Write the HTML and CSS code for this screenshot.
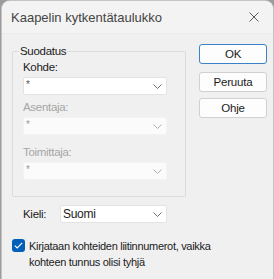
FILE: index.html
```html
<!DOCTYPE html>
<html lang="fi">
<head>
    <meta charset="UTF-8">
    <title>Kaapelin kytkentätaulukko</title>
    <link rel="stylesheet" href="styles.css">
</head>
<body>
    <div class="window">
        <div class="titlebar">
            <span class="title">Kaapelin kytkentätaulukko</span>
            <svg class="close" width="10" height="10" viewBox="0 0 10 10">
                <path d="M0.5 0.5 L9.5 9.5 M9.5 0.5 L0.5 9.5" stroke="#5a5a5a" stroke-width="1" fill="none"/>
            </svg>
        </div>
        <div class="content">
            <div class="main">
                <fieldset class="group">
                    <legend>Suodatus</legend>
                    <label class="lbl">Kohde:</label>
                    <div class="combo">
                        <span class="star">*</span>
                        <svg class="chev" width="9" height="5" viewBox="0 0 9 5"><path d="M0.5 0.5 L4.5 4.5 L8.5 0.5" stroke="#707070" fill="none"/></svg>
                    </div>
                    <label class="lbl disabled">Asentaja:</label>
                    <div class="combo off">
                        <span class="star">*</span>
                        <svg class="chev" width="9" height="5" viewBox="0 0 9 5"><path d="M0.5 0.5 L4.5 4.5 L8.5 0.5" stroke="#b0b0b0" fill="none"/></svg>
                    </div>
                    <label class="lbl disabled last">Toimittaja:</label>
                    <div class="combo off">
                        <span class="star">*</span>
                        <svg class="chev" width="9" height="5" viewBox="0 0 9 5"><path d="M0.5 0.5 L4.5 4.5 L8.5 0.5" stroke="#b0b0b0" fill="none"/></svg>
                    </div>
                </fieldset>
                <div class="lang-row">
                    <label class="lang-lbl">Kieli:</label>
                    <div class="combo lang">
                        <span>Suomi</span>
                        <svg class="chev" width="9" height="5" viewBox="0 0 9 5"><path d="M0.5 0.5 L4.5 4.5 L8.5 0.5" stroke="#707070" fill="none"/></svg>
                    </div>
                </div>
                <div class="check-row">
                    <span class="checkbox">
                        <svg width="9" height="7" viewBox="0 0 9 7"><path d="M0.8 3.6 L3.2 6 L8.2 0.8" stroke="#fff" stroke-width="1.2" fill="none"/></svg>
                    </span>
                    <span class="check-text">Kirjataan kohteiden liitinnumerot, vaikka<br>kohteen tunnus olisi tyhjä</span>
                </div>
            </div>
            <div class="buttons">
                <button class="btn default">OK</button>
                <button class="btn">Peruuta</button>
                <button class="btn">Ohje</button>
            </div>
        </div>
    </div>
</body>
</html>
```

FILE: styles.css
```css
body {
    margin: 0;
    background-color: #9c9c9c;
    font-family: "Liberation Sans", Arial, sans-serif;
    font-size: 11.5px;
    letter-spacing: -0.3px;
    color: #1b1b1b;
    overflow: hidden;
}
.window {
    margin: 1px 0 0 2px;
    width: 271px;
    height: 290px;
    background-color: #f0f0f0;
    border-radius: 8px 8px 0 0;
    box-shadow: 0 0 0 1px #c4c4c4;
}
.titlebar {
    height: 32px;
    display: flex;
    align-items: center;
    justify-content: space-between;
    padding: 0 14px 0 9px;
    background-color: #f3f3f3;
    border-radius: 8px 8px 0 0;
    border-bottom: 1px solid #ebebeb;
}
.title {
    font-size: 13px;
    letter-spacing: 0;
    color: #444;
}
.content {
    display: flex;
    padding-top: 10px;
}
.main {
    margin-left: 10px;
    width: 175px;
}
.group {
    margin: 0;
    padding: 0 0 16px 10px;
    width: 162px;
    border: 1px solid #dcdcdc;
    border-radius: 2px;
    display: flex;
    flex-direction: column;
}
.group legend {
    padding: 0 1px;
    margin-left: -4px;
    line-height: 14px;
}
.lbl {
    line-height: 16px;
    margin-top: 1px;
    margin-bottom: 2px;
}
.lbl.disabled {
    color: #a6a6a6;
    margin-top: 4px;
}
.lbl.disabled.last {
    margin-top: 9px;
}
.combo {
    width: 140px;
    height: 16px;
    background-color: #fff;
    border: 1px solid #e3e3e3;
    border-radius: 2px;
    display: flex;
    align-items: center;
    justify-content: space-between;
    padding: 0 0 0 2px;
}
.combo .star {
    font-size: 10px;
    color: #555;
    margin-top: -4px;
}
.combo .chev {
    margin-right: 4px;
}
.combo.off {
    background-color: #fbfbfb;
    border-color: #f3f3f3;
}
.combo.off .star {
    color: #999;
}
.lang-row {
    display: flex;
    align-items: center;
    margin-top: 8px;
    padding-left: 11px;
}
.lang-lbl {
    width: 37px;
}
.combo.lang {
    width: 103px;
    font-size: 12px;
}
.check-row {
    display: flex;
    margin-top: 16px;
}
.checkbox {
    flex: none;
    width: 13px;
    height: 13px;
    border-radius: 3px;
    background-color: #005fb8;
    display: flex;
    align-items: center;
    justify-content: center;
}
.check-text {
    margin-left: 4px;
    line-height: 16px;
    font-size: 11px;
    white-space: nowrap;
    margin-top: -1px;
}
.buttons {
    display: flex;
    flex-direction: column;
    gap: 6px;
    margin-left: 12px;
}
.btn {
    width: 68px;
    height: 20px;
    font-family: inherit;
    font-size: 11.5px;
    letter-spacing: -0.2px;
    color: #1b1b1b;
    background-color: #fdfdfd;
    border: 1px solid #d0d0d0;
    border-radius: 3px;
    padding: 0;
}
.btn.default {
    border: 1px solid #3b83c9;
    margin-bottom: 2px;
}
```
